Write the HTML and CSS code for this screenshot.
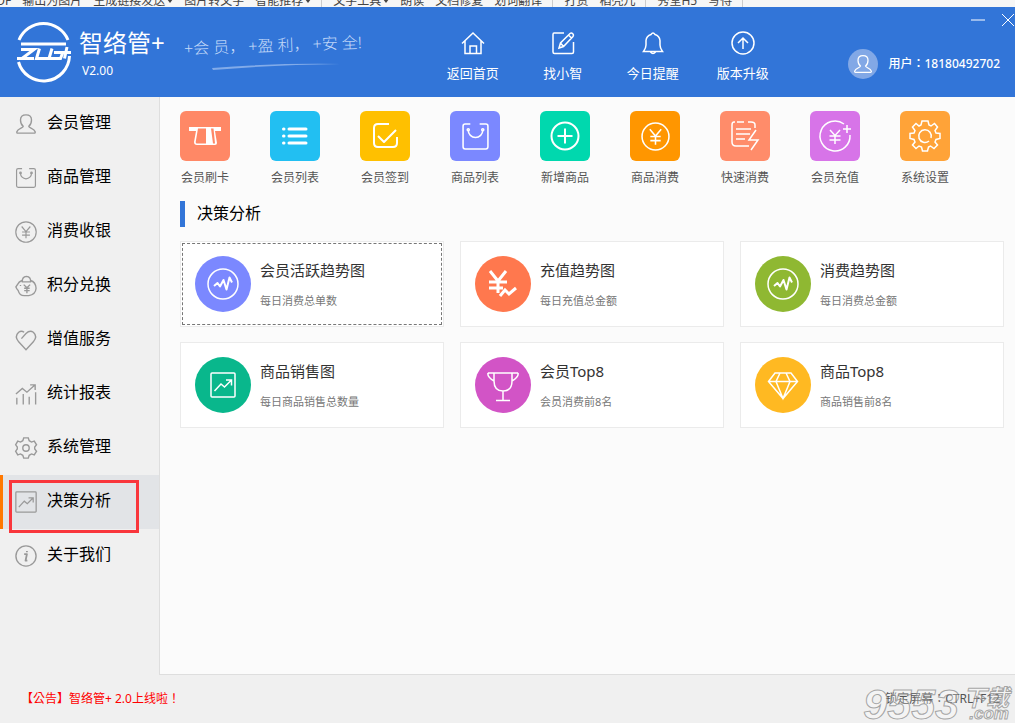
FILE: index.html
```html
<!DOCTYPE html>
<html lang="zh-CN">
<head>
<meta charset="utf-8">
<title>智络管+</title>
<link rel="stylesheet" href="styles.css">
</head>
<body>
<svg class="sprite" aria-hidden="true">
  <symbol id="person" viewBox="0 0 24 24"><path d="M9 14.500C7 13 6 10.500 6 7.500C6 4 8.500 2 12 2s6 2 6 5.500c0 3-1 5.500-3 7c0 2 6 2 7 6q.3 1.500-1 1.500H3q-1.300 0-1-1.500c1-4 7-4 7-6z"/></symbol>
  <symbol id="bag" viewBox="0 0 28 28"><path d="M9 2H4Q2 2 2 4V24Q2 26 4 26H24Q26 26 26 24V4Q26 2 24 2H18M7 8a7 7 0 0 0 14 0"/><circle cx="7" cy="7.500" r="1"/><circle cx="21" cy="7.500" r="1"/></symbol>
  <symbol id="yen" viewBox="0 0 28 28"><circle cx="14" cy="14" r="13"/><path d="M8.500 7L14 13.500L19.500 7M14 13.500V22M9 14H19M9 18H19"/></symbol>
  <symbol id="wave" viewBox="0 0 32 32"><circle cx="16" cy="16" r="15"/><path class="bold" d="M7 18L10.500 15L13 18.500L16.500 12L19.500 21.500L22.500 9.500L25 14.500"/></symbol>
  <symbol id="trend" viewBox="0 0 26 26"><rect x="1" y="1" width="24" height="24" rx="1"/><path d="M4.500 19L11 12L14.500 15L21 8.500M16 8H21.500V13.500"/></symbol>
</svg>

<div class="strip">
  <span>PDF</span><span>输出为图片</span><span>生成链接发送<i class="caret"></i></span><span>图片转文字</span><span class="group-end">智能推荐<i class="caret"></i></span>
  <span>文字工具<i class="caret"></i></span><span>朗读</span><span>文档修复</span><span class="group-end">划词翻译</span>
  <span>打赏</span><span class="group-end">稻壳儿</span><span>秀堂H5</span><span class="group-end">写得</span>
</div>

<header class="header">
  <div class="brand">
    <svg class="logo" viewBox="0 0 56 56" aria-hidden="true">
      <path d="M3 16A26.500 26.500 0 0 1 52 16M2.500 38A26 26 0 0 0 53.500 32"/>
      <path d="M5 20H50"/>
      <path class="mark" d="M5 25.500H18L6 34.500M1 34.500H18M23.500 24.500L20.500 34.500H32M36 24.500L33 34.500H44.500L47 28M38 28.500H55M51 23L48.500 34.500"/>
    </svg>
    <div>
      <h1 class="brand-name">智络管+</h1>
      <p class="version">V2.00</p>
    </div>
  </div>
  <div class="slogan">
    <p class="slogan-text"><span>+会 员，</span><span>+盈 利，</span><span>+安 全!</span></p>
    <svg class="swoosh" viewBox="0 0 130 8" aria-hidden="true"><path d="M0 5Q60 0 128 1Q60 2 1 7z"/></svg>
  </div>
  <nav class="top-nav">
    <a href="#home"><svg viewBox="0 0 24 24"><path d="M1 12.500L12 2L23 12.500M4 10V22.500H20V10M9 22.500V15H15.500V22.500"/></svg>返回首页</a>
    <a href="#find"><svg viewBox="0 0 24 24"><path d="M13 2H3Q2 2 2 3.500V21Q2 22.500 3.500 22.500H21Q22.500 22.500 22.500 21V11M8 17L9.500 12L19 2.500Q20.500 1.500 22 3Q23 4 22 5.500L12.500 15.500zM17.500 4L20.500 7M9.500 12L12.500 15.500"/></svg>找小智</a>
    <a href="#remind"><svg viewBox="0 0 24 24"><path d="M2.500 20.500Q5 17 5 14V9.500Q5.500 5 10 3.500Q12 .5 14 3.500Q18.500 5 19 9.500V14Q19 17 21.500 20.500zM9.500 21Q12 24 14.500 21"/></svg>今日提醒</a>
    <a href="#upgrade"><svg viewBox="0 0 24 24"><circle cx="12" cy="12" r="11"/><path d="M12 18V7M7 12L12 7L17 12"/></svg>版本升级</a>
  </nav>
  <div class="user">
    <span class="avatar"><svg><use href="#person"/></svg></span>
    <span class="wide-marks">用户：18180492702</span>
  </div>
  <div class="window-buttons">
    <button type="button" aria-label="最小化"><svg viewBox="0 0 14 14"><path d="M0 7H14"/></svg></button>
    <button type="button" aria-label="关闭"><svg viewBox="0 0 14 14"><path d="M1 1L13 13M13 1L1 13"/></svg></button>
  </div>
</header>

<div class="body">
  <nav class="sidebar">
    <a href="#member"><svg><use href="#person"/></svg>会员管理</a>
    <a href="#goods"><svg><use href="#bag"/></svg>商品管理</a>
    <a href="#cashier"><svg><use href="#yen"/></svg>消费收银</a>
    <a href="#points"><svg viewBox="0 0 24 24"><path d="M7.500 6Q4 7.500 3 10L1 13Q2 15.500 3.500 17Q5 22.500 10 22.500H15Q22.500 21.500 23 14.500Q22.500 7.500 17 6M8 7.500Q7.500 2 12.500 1.500Q17.500 2 17 7.500zM9.500 10.500L13 14L16.500 10.500M13 14V20M10 14.500H16M10 17H16M6 11V12"/></svg>积分兑换</a>
    <a href="#service"><svg viewBox="0 0 24 24"><path d="M7 10.500L12 5Q16 1 20 3.500Q25 8 20 14L12 22.500L4 14Q-1 8 4 3.500Q7 1.500 10 3.500"/></svg>增值服务</a>
    <a href="#report"><svg viewBox="0 0 24 24"><path d="M1 12L8 6L13 10L22 2M16.500 2H22V7.500M2 16V23.500M9 12V23.500M15.500 15V23.500M22.500 10V23.500"/></svg>统计报表</a>
    <a href="#system"><svg viewBox="0 0 24 24"><path d="M9.500 1H14.500L15.500 4L18 5.500L21 4.500L23.500 8.500L21.500 11V13L23.500 15.500L21 19.500L18 18.500L15.500 20L14.500 23H9.500L8.500 20L6 18.500L3 19.500L.7 15.500L2.500 13V11L.7 8.500L3 4.500L6 5.500L8.500 4z"/><circle cx="12" cy="12" r="3.500"/></svg>系统管理</a>
    <a href="#decision" class="active" aria-current="page"><svg><use href="#trend"/></svg>决策分析</a>
    <a href="#about"><svg viewBox="0 0 24 24"><circle cx="12" cy="12" r="11"/><path class="bold" d="M10 10H13L11.500 17H13.500M13 6.500V8"/></svg>关于我们</a>
  </nav>

  <main class="content">
    <nav class="shortcuts">
      <a href="#swipe"><span class="tile coral"><svg viewBox="0 0 32 32"><path class="solid" d="M0 7H32V11H26L28 23Q28 25 26 25H8Q5 25 5 22L7 11H0z"/><path class="slot" d="M9 8.500H17V23.500H8Q6.500 23.500 6.700 22zM22 8.500H24.500L26 23.500H24z"/></svg></span>会员刷卡</a>
      <a href="#list"><span class="tile sky"><svg viewBox="0 0 32 32"><path class="round" d="M10 9H27M10 16H27M10 23H27M4.500 9H5M4.500 16H5M4.500 23H5"/></svg></span>会员列表</a>
      <a href="#sign"><span class="tile yellow"><svg viewBox="0 0 32 32"><path class="bold" d="M20 4H9Q5 4 5 8V23Q5 27 9 27H24Q28 27 28 23V17M9 16L15 22L27 10"/></svg></span>会员签到</a>
      <a href="#goods-list"><span class="tile violet"><svg class="medium"><use href="#bag"/></svg></span>商品列表</a>
      <a href="#goods-new"><span class="tile green"><svg viewBox="0 0 32 32"><path class="bold" d="M16 8.500V23.500M8.500 16H23.500"/><circle class="bold" cx="16" cy="16" r="13.500"/></svg></span>新增商品</a>
      <a href="#spend"><span class="tile orange"><svg class="medium"><use href="#yen"/></svg></span>商品消费</a>
      <a href="#quick"><span class="tile salmon"><svg viewBox="0 0 32 32"><path d="M6 2H5Q3 2 3 5V22Q3 26 7 26H20M8 2H15M19 2H22Q26 2 26 5V8M7 9H22M7 14H21M7 19H16M27 10L20 20H29L22 30"/></svg></span>快速消费</a>
      <a href="#recharge"><span class="tile purple"><svg viewBox="0 0 32 32"><path d="M25 4A15 15 0 1 0 31 15M28 5V13M24 9H32M11 10L16 15.500L21 10M16 15.500V24M10.500 16H21.500M10.500 20H21.500"/></svg></span>会员充值</a>
      <a href="#settings"><span class="tile amber"><svg viewBox="0 0 32 32"><path d="M13 1H19L20 5L22 6L25.500 3.500L28.500 7L26 10.500L27 13L31 13.500V18.500L27 19.500L26 22L28.500 25L25 28.500L21.500 26L19.500 27L18.500 31H13.500L12.500 27L10 26L7 28.500L3.500 25L6 22L5 19.500L1 18.500V13.500L5 13L6 10.500L3.500 7L7 3.500L10 6L12 5z"/><path d="M20 21A6.300 6.300 0 1 1 22 18"/></svg></span>系统设置</a>
    </nav>

    <h2 class="section-title">决策分析</h2>

    <div class="cards">
      <button type="button" class="card focused"><span class="disc violet"><svg><use href="#wave"/></svg></span><span class="card-text"><strong>会员活跃趋势图</strong><small>每日消费总单数</small></span></button>
      <button type="button" class="card"><span class="disc tomato"><svg viewBox="0 0 32 32"><path class="heavy" d="M3 3L11 13L19 3M11 13V25M2 14H20M2 20H16"/><path class="heavy" d="M13 28L18 22L22 26L29 20"/></svg></span><span class="card-text"><strong>充值趋势图</strong><small>每日充值总金额</small></span></button>
      <button type="button" class="card"><span class="disc olive"><svg><use href="#wave"/></svg></span><span class="card-text"><strong>消费趋势图</strong><small>每日消费总金额</small></span></button>
      <button type="button" class="card"><span class="disc teal"><svg class="medium"><use href="#trend"/></svg></span><span class="card-text"><strong>商品销售图</strong><small>每日商品销售总数量</small></span></button>
      <button type="button" class="card"><span class="disc magenta"><svg viewBox="0 0 32 32"><path d="M1 4H31M7 4V12Q7 22 16 22Q25 22 25 12V4M1 4Q0 8 7 12M31 4Q32 8 25 12M16 22V31.500M9 31.500H23"/></svg></span><span class="card-text"><strong>会员Top8</strong><small>会员消费前8名</small></span></button>
      <button type="button" class="card"><span class="disc gold"><svg viewBox="0 0 32 32"><path d="M8 4H24L30.500 12.500L16 29.500L1.500 12.500zM1.500 12.500H30.500M13 4L9 12.500L16 29.500L23 12.500L19 4"/></svg></span><span class="card-text"><strong>商品Top8</strong><small>商品销售前8名</small></span></button>
    </div>
  </main>
</div>

<footer class="footer wide-marks">
  <p class="notice">【公告】智络管+ 2.0上线啦！</p>
  <p>锁定屏幕：CTRL+F12</p>
  <div class="watermark"><span class="mark-number">9553</span><span class="mark-side"><span>下载</span><span class="mark-com">.com</span></span></div>
</footer>
</body>
</html>
```
FILE: styles.css
```css
* { box-sizing: border-box; }

body {
  margin: 0;
  min-height: 100vh;
  display: flex;
  flex-direction: column;
  background: #f0f0f0;
  color: #000;
  font: 12px/16px "Noto Sans", "Noto Sans CJK SC", sans-serif;
}

h1, h2, p { margin: 0; font-weight: 400; }
a { color: inherit; text-decoration: none; }
svg { flex: none; fill: none; stroke: currentColor; stroke-width: 1.500; overflow: visible; }
.sprite { position: absolute; width: 0; height: 0; }
.bold { stroke-width: 2; stroke-linejoin: round; }
.heavy { stroke-width: 3; }
.round { stroke-width: 3; stroke-linecap: round; }
.solid { fill: currentColor; stroke: none; }
.slot { fill: #ff8866; stroke: none; }

/* Centred full-width punctuation */
.wide-marks {
  font-family: "Noto Sans", "Noto Sans CJK TC", "Noto Sans CJK SC", sans-serif;
  font-feature-settings: "locl" 0;
  text-spacing-trim: space-all;
}

/* Toolbar strip above the window */
.strip {
  height: 7px;
  display: flex;
  align-items: flex-end;
  overflow: hidden;
  background: #f6f6f6;
  color: #444;
  line-height: 12px;
  white-space: nowrap;
  margin-left: -11px;
}
.strip span { display: flex; align-items: center; margin-right: 11px; }
.strip .group-end { padding-right: 10px; border-right: 1px solid #ccc; }
.caret { margin-left: 2px; border: 3px solid transparent; border-top: 4px solid #444; border-bottom: 0; }

/* Header */
.header {
  position: relative;
  height: 90px;
  display: flex;
  align-items: center;
  padding: 0 15px 0 16px;
  background: #3275d8;
  color: #fff;
}
.brand { display: flex; align-items: center; gap: 7px; }
.logo { width: 56px; height: 56px; stroke-width: 3; }
.mark { stroke-width: 3; }
.brand-name { font-size: 24px; line-height: 32px; padding-top: 4px; }
.version { padding: 2px 0 0 3px; line-height: 20px; font-size: 12px; }
.slogan { margin-left: 19px; width: 190px; }
.slogan-text {
  display: flex;
  gap: 3px;
  color: #c6dbf8;
  font-size: 16px;
  line-height: 24px;
  font-weight: 300;
  white-space: nowrap;
  transform: rotate(-2deg);
}
.swoosh { display: block; width: 130px; height: 8px; margin: 6px 0 0 28px; fill: #82abe9; stroke: none; }
.top-nav { display: flex; margin: 10px 0 0 54px; }
.top-nav a {
  width: 90px;
  display: flex;
  flex-direction: column;
  align-items: center;
  gap: 8px;
  font-size: 13px;
  line-height: 20px;
}
.top-nav svg { width: 24px; height: 24px; }
.user { display: flex; align-items: center; gap: 10px; margin: 24px 0 0 auto; font-weight: 500; white-space: nowrap; }
.avatar { width: 30px; height: 30px; border-radius: 50%; background: #82a8e6; display: grid; place-items: center; }
.avatar svg { width: 20px; height: 20px; }
.window-buttons { position: absolute; top: 6px; right: 0; display: flex; gap: 16px; }
.window-buttons button { width: 14px; height: 14px; padding: 0; border: 0; background: none; color: #fff; }
.window-buttons svg { display: block; width: 14px; height: 14px; stroke-width: 1; }

/* Main area */
.body { flex: 1; display: flex; }
.sidebar { width: 160px; flex: none; border-right: 1px solid #dedede; }
.sidebar a {
  position: relative;
  height: 54px;
  display: flex;
  align-items: center;
  gap: 10px;
  padding: 0 0 4px 15px;
  font-size: 16px;
  line-height: 24px;
}
.sidebar svg { width: 22px; height: 22px; color: #999; margin-top: 4px; }
.sidebar .active { background: #e2e4e7; padding-left: 12px; border-left: 3px solid #ff7800; }
.sidebar .active::after {
  content: "";
  position: absolute;
  inset: 5px 20px -4px 6px;
  border: 3px solid #f9363c;
  z-index: 1;
}
.content {
  flex: 1;
  padding: 14px 11px 0 20px;
  background: #fbfbfb;
  border-bottom: 1px solid #dedede;
}
.shortcuts { display: flex; gap: 40px; }
.shortcuts a {
  width: 50px;
  display: flex;
  flex-direction: column;
  align-items: center;
  gap: 9px;
  color: #555;
  white-space: nowrap;
}
.tile { width: 50px; height: 50px; border-radius: 6px; display: grid; place-items: center; color: #fff; }
.tile svg { width: 32px; height: 32px; }
.tile .medium { width: 29px; height: 29px; }
.coral { background: #ff8866; }
.sky { background: #22bff2; }
.yellow { background: #ffc000; }
.violet { background: #7b88ff; }
.green { background: #00d8ae; }
.orange { background: #ff9600; }
.salmon { background: #ff8c6a; }
.purple { background: #d774e8; }
.amber { background: #ffa338; }
.tomato { background: #ff784e; }
.olive { background: #8fb832; }
.teal { background: #09b78c; }
.magenta { background: #d254c6; }
.gold { background: #ffb922; }

.section-title {
  margin: 15px 0 14px;
  padding: 0 0 2px 12px;
  border-left: 5px solid #3275d8;
  font-size: 16px;
  line-height: 24px;
}

.cards { display: grid; grid-template-columns: repeat(3, 1fr); gap: 15px 16px; }
.card {
  height: 86px;
  display: flex;
  align-items: center;
  gap: 9px;
  padding: 0 14px;
  border: 1px solid #ebebeb;
  background: #fff;
  color: #333;
  font: inherit;
  text-align: left;
}
.focused { outline: 1px dashed #777; outline-offset: -3px; }
.disc { flex: none; width: 56px; height: 56px; border-radius: 50%; display: grid; place-items: center; color: #fff; }
.disc svg { width: 32px; height: 32px; }
.disc .medium { width: 26px; height: 26px; }
.card-text { display: flex; flex-direction: column; gap: 13px; }
.card strong { font-size: 15px; line-height: 20px; font-weight: 400; }
.card small { font-size: 11px; line-height: 16px; color: #777; }

/* Status bar */
.footer {
  position: relative;
  height: 48px;
  display: flex;
  align-items: center;
  justify-content: space-between;
  padding: 0 15px 0 21px;
  color: #555;
}
.notice { color: #f00; }
.watermark {
  position: absolute;
  right: 6px;
  bottom: 3px;
  display: flex;
  align-items: center;
  gap: 4px;
  color: rgba(255, 255, 255, .3);
  -webkit-text-stroke: 1px rgba(130, 130, 130, .7);
  font-family: "Liberation Sans", "Noto Sans CJK SC", sans-serif;
  font-weight: 700;
  font-style: italic;
  pointer-events: none;
}
.mark-number { font-size: 43px; line-height: 32px; }
.mark-side { display: flex; flex-direction: column; align-items: flex-end; font-size: 23px; line-height: 20px; }
.mark-com { font-size: 17px; line-height: 12px; }
```
